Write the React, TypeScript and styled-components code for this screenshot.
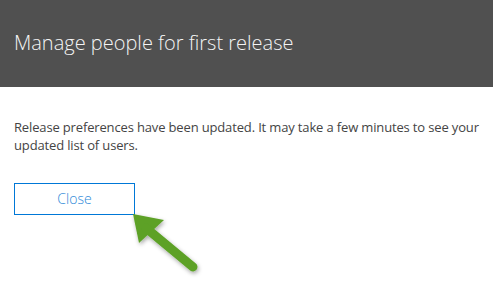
import styled, { createGlobalStyle } from 'styled-components'

const GlobalStyle = createGlobalStyle`
  html, body {
    margin: 0;
    padding: 0;
    background: #ffffff;
  }
  body {
    font-family: 'Open Sans', 'Noto Sans', sans-serif;
  }
`

const Page = styled.div`
  position: relative;
  width: 493px;
  height: 287px;
  background: #ffffff;
  overflow: hidden;
`

const Header = styled.div`
  height: 87px;
  background: #505050;
  display: flex;
  align-items: center;
  padding: 0 14px;
  box-sizing: border-box;
`

const Title = styled.h1`
  margin: 0;
  padding-bottom: 2px;
  font-size: 20px;
  font-weight: 300;
  color: #f4f4f4;
`

const Body = styled.div`
  padding: 31px 14px 0;
  display: flex;
  flex-direction: column;
  align-items: flex-start;
`

const Message = styled.p`
  margin: 0;
  font-size: 13px;
  line-height: 18px;
  letter-spacing: -0.15px;
  color: #444444;
`

const CloseButton = styled.button`
  margin-top: 29px;
  width: 121px;
  height: 32px;
  border: 1px solid #0078d7;
  background: #ffffff;
  color: #2b88d8;
  font-family: inherit;
  font-size: 14px;
  font-weight: 300;
  padding: 0 0 2px;
  cursor: pointer;
`

const Pointer = styled.svg`
  position: absolute;
  left: 126px;
  top: 206px;
  overflow: visible;
`

export default function App() {
  return (
    <>
      <GlobalStyle />
      <Page>
        <Header>
          <Title>Manage people for first release</Title>
        </Header>
        <Body>
          <Message>
            Release preferences have been updated. It may take a few minutes to see your updated list of users.
          </Message>
          <CloseButton>Close</CloseButton>
        </Body>
        <Pointer width="80" height="70" viewBox="0 0 80 70">
          <defs>
            <filter id="shadow" x="-30%" y="-30%" width="160%" height="160%">
              <feDropShadow dx="1" dy="2" stdDeviation="2" floodColor="#000" floodOpacity="0.35" />
            </filter>
          </defs>
          <g filter="url(#shadow)" fill="#5da128">
            <path d="M7 8 L38 14 L13 37 Z" />
            <line x1="20" y1="22" x2="67" y2="61" stroke="#5da128" strokeWidth="9" strokeLinecap="round" />
          </g>
        </Pointer>
      </Page>
    </>
  )
}
